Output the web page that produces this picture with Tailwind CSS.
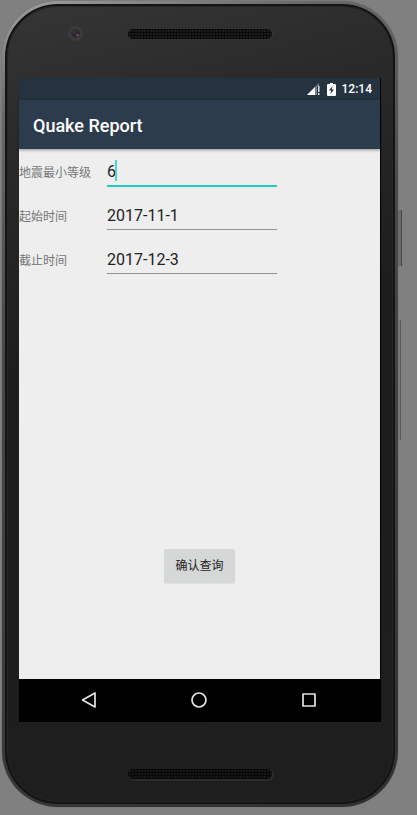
<!DOCTYPE html>
<html lang="zh-CN">
<head>
<meta charset="utf-8">
<meta name="viewport" content="width=device-width, initial-scale=1">
<title>Quake Report</title>
<script src="https://cdn.jsdelivr.net/npm/@tailwindcss/browser@4"></script>
</head>
<body class="flex min-h-screen flex-col bg-[#808080] pt-px pr-[19px] pb-2 pl-[2px] font-[Roboto,'Noto_Sans_CJK_SC',sans-serif]">
  <!-- Phone shell -->
  <div class="relative flex flex-1 flex-col rounded-[56px] bg-linear-[160deg,#a0a0a0_0%,#686868_12%,#4a4a4a_35%,#404040_60%,#303030_100%] p-[3px] shadow-[0_0_1px_#555]">
    <!-- Side buttons -->
    <div class="absolute top-[209px] -right-1 h-[56px] w-1 border-r border-[#484445] bg-[#6c6a6b]"></div>
    <div class="absolute top-[319px] -right-[3px] h-[120px] w-[3px] border-r border-[#5a5758] bg-[#777]"></div>

    <div class="relative flex flex-1 flex-col rounded-[53px] border-2 border-[#141414] bg-linear-[165deg,#353536_0%,#292929_18%,#1d1d1d_42%,#1e1e1f_100%] px-3 shadow-[inset_0_0_0_1px_#262626]">
      <header class="relative flex h-[72px] shrink-0 justify-center pt-[22px]">
        <svg class="absolute top-5 left-[49px] size-4" viewBox="0 0 16 16" aria-hidden="true">
          <circle cx="7.500" cy="7.500" r="7.500" fill="#3b3b3c"/>
          <circle cx="7.500" cy="7.500" r="4.300" fill="#292731"/>
          <circle cx="6" cy="6" r="2" fill="#34313d"/>
          <circle cx="9.500" cy="9.200" r="1.200" fill="#76514f"/>
        </svg>
        <div class="h-3 w-[146px] rounded-full bg-[#1b1b1b] bg-[radial-gradient(circle,#0a0a0a_1px,#202020_1.500px)] bg-[size:3px_3px] bg-clip-content p-px shadow-[1px_0_0_#333]"></div>
      </header>

      <!-- Screen -->
      <main class="flex flex-1 flex-col border-r border-black bg-[#eee]">
        <div class="flex h-[22px] items-center justify-end bg-[#25323f] pr-2 text-white">
          <svg class="mr-[6px] h-3 w-[14px]" viewBox="0 0 14 12" aria-hidden="true">
            <path d="M0 12 12 0V12Z" fill="#7b858e"/>
            <path d="M0 12 8 4V12Z" fill="#fff"/>
            <path d="M10 3h4v9h-4z" fill="#25323f"/>
            <path d="M11 3h1.500v6H11zM11 10h1.500v2H11z" fill="#dfe3e6"/>
          </svg>
          <svg class="mr-[6px] h-[13px] w-[9px]" viewBox="0 0 9 13" aria-hidden="true">
            <path d="M3 0h3v1h2q1 0 1 1v10q0 1-1 1H1q-1 0-1-1V2q0-1 1-1h2z" fill="#fff"/>
            <path d="M5.500 3 2 7.500h2.200L3.500 11 7 6.500H4.800z" fill="#25323f"/>
          </svg>
          <time class="text-[12px] leading-4 font-medium">12:14</time>
        </div>
        <div class="relative flex h-[49px] items-center bg-[#2c3c4c] px-[14px] pt-[2px] shadow-[0_1px_3px_#0006]">
          <h1 class="text-[18px] leading-6 font-medium text-white">Quake Report</h1>
        </div>

        <form class="flex flex-1 flex-col">
          <div class="flex h-11">
            <label for="mag" class="w-[88px] pt-4 text-[12px] leading-4 text-[#757575]">地震最小等级</label>
            <div class="relative h-[38px] w-[47%]">
              <input id="mag" value="6" class="h-full w-full border-b-2 border-[#25c9c3] bg-transparent pt-2 text-[16px] text-[#222] outline-none">
              <span class="absolute top-[11px] left-2 h-[21px] w-[2px] bg-[#4fd3cf]"></span>
            </div>
          </div>
          <div class="flex h-11">
            <label for="start" class="w-[88px] pt-4 text-[12px] leading-4 text-[#757575]">起始时间</label>
            <input id="start" value="2017-11-1" class="h-[37px] w-[47%] border-b border-[#929292] bg-transparent pt-2 text-[16px] text-[#222] outline-none">
          </div>
          <div class="flex h-11">
            <label for="end" class="w-[88px] pt-4 text-[12px] leading-4 text-[#757575]">截止时间</label>
            <input id="end" value="2017-12-3" class="h-[37px] w-[47%] border-b border-[#929292] bg-transparent pt-2 text-[16px] text-[#222] outline-none">
          </div>
          <button type="button" class="mx-auto mt-auto mb-24 h-[34px] rounded-[2px] bg-[#d6d8d7] px-[11px] text-[12px] text-[#222] shadow-[0_1px_1px_#0001]">确认查询</button>
        </form>

        <nav class="grid h-[43px] grid-cols-3 items-center justify-items-center bg-black pr-4 pb-[2px] pl-[15px]">
          <button type="button" aria-label="返回" class="size-5">
            <svg class="size-5" viewBox="0 0 20 20" fill="none" stroke="#e4e4e4" stroke-width="1.700" stroke-linejoin="round"><path d="M16 3V17L3.500 10Z"/></svg>
          </button>
          <button type="button" aria-label="主页" class="size-5">
            <svg class="size-5" viewBox="0 0 20 20" fill="none" stroke="#e4e4e4" stroke-width="1.700"><circle cx="10" cy="10" r="7"/></svg>
          </button>
          <button type="button" aria-label="概览" class="size-5">
            <svg class="size-5" viewBox="0 0 20 20" fill="none" stroke="#e4e4e4" stroke-width="1.700" stroke-linejoin="round"><path d="M4 4H16V16H4Z"/></svg>
          </button>
        </nav>
      </main>

      <footer class="flex h-20 shrink-0 items-end justify-center pb-[22px]">
        <div class="h-3 w-[146px] rounded-full bg-[#171717] bg-[radial-gradient(circle,#070707_1px,#1b1b1b_1.500px)] bg-[size:3px_3px] bg-clip-content p-px shadow-[1px_1px_0_#2c2c2c]"></div>
      </footer>
    </div>
  </div>
</body>
</html>
